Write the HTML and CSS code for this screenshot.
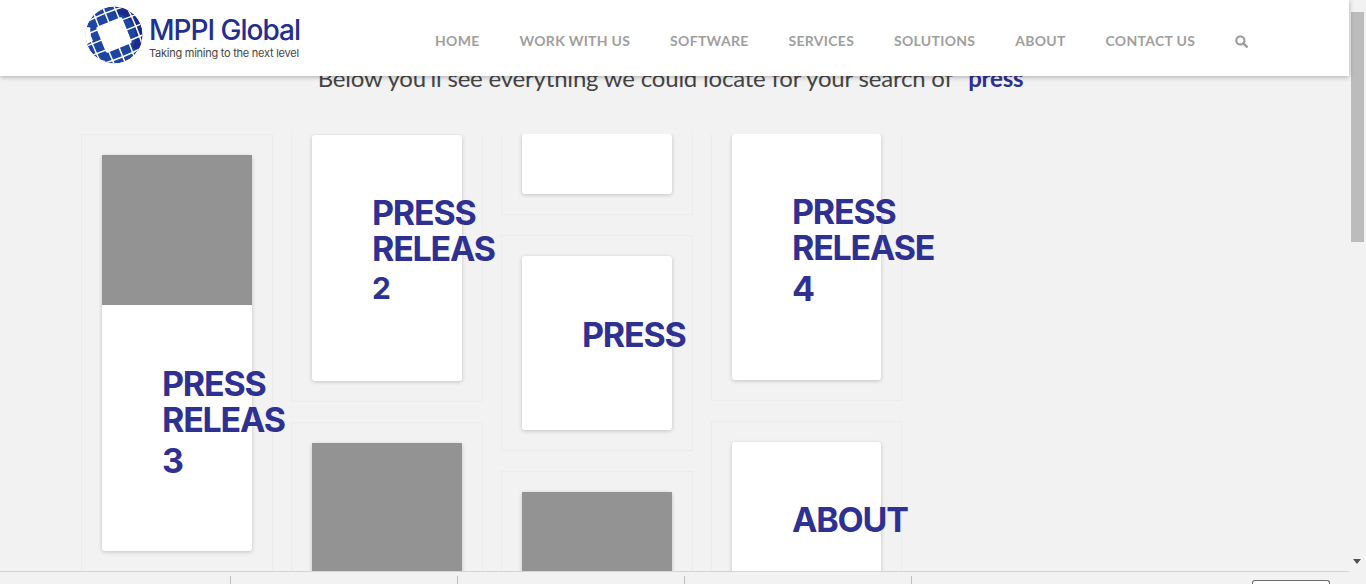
FILE: index.html
```html
<!DOCTYPE html>
<html lang="en">
<head>
    <meta charset="UTF-8">
    <title>Search results for press - MPPI Global</title>
    <link rel="stylesheet" href="styles.css">
</head>
<body>
    <div class="page">
        <header class="site-header">
            <a class="logo" href="#">
                <svg class="logo-globe" viewBox="0 0 58 58" width="58" height="58">
                    <defs>
                        <clipPath id="globe-clip"><circle cx="29" cy="29" r="28.5"/></clipPath>
                    </defs>
                    <g clip-path="url(#globe-clip)">
                        <circle cx="29" cy="29" r="28.5" fill="#1f45a3"/>
                        <path d="M29 4A25 25 0 0 1 50 43" fill="none" stroke="#1c2a8c" stroke-width="7"/>
                        <g transform="rotate(-22 29 29)">
                            <g fill="none" stroke="#fff" stroke-width="1.5">
                                <path d="M8 -4Q3 29 8 62"/>
                                <path d="M18.5 -4Q17 29 18.5 62"/>
                                <path d="M29 -4V62"/>
                                <path d="M39.5 -4Q41 29 39.5 62"/>
                                <path d="M50 -4Q55 29 50 62"/>
                                <path d="M-4 8Q29 3 62 8"/>
                                <path d="M-4 18.5Q29 17 62 18.5"/>
                                <path d="M-4 29H62"/>
                                <path d="M-4 39.5Q29 41 62 39.5"/>
                                <path d="M-4 50Q29 55 62 50"/>
                            </g>
                            <rect x="15" y="15" width="28" height="28" rx="2" fill="#fff"/>
                        </g>
                        <!-- open left edge of the globe -->
                        <path d="M4 37A26 26 0 0 1 1 21" fill="none" stroke="#fff" stroke-width="9"/>
                        <path d="M4 47A29 29 0 0 0 20 57" fill="none" stroke="#fff" stroke-width="4"/>
                    </g>
                </svg>
                <span class="logo-text">
                    <span class="logo-name">MPPI Global</span>
                    <span class="logo-tag">Taking mining to the next level</span>
                </span>
            </a>
            <nav class="main-nav">
                <a href="#">Home</a>
                <a href="#">Work with us</a>
                <a href="#">Software</a>
                <a href="#">Services</a>
                <a href="#">Solutions</a>
                <a href="#">About</a>
                <a href="#">Contact us</a>
                <a href="#" class="nav-search" aria-label="Search">
                    <svg viewBox="0 0 14 14" width="13" height="13">
                        <circle cx="5.8" cy="5.8" r="4.4" fill="none" stroke="#9f9f9f" stroke-width="2.4"/>
                        <path d="M9 9L12.6 12.6" stroke="#9f9f9f" stroke-width="2.8" stroke-linecap="round"/>
                    </svg>
                </a>
            </nav>
        </header>

        <p class="search-intro">Below you'll see everything we could locate for your search of <b>press</b></p>

        <main class="results">
            <div class="col">
                <article class="tile">
                    <div class="card">
                        <div class="thumb"></div>
                        <h2 class="card-title title-low">Press Releas <span class="num">3</span></h2>
                    </div>
                </article>
            </div>
            <div class="col">
                <article class="tile tile-cut tile-cut-1">
                    <div class="card card-246">
                        <h2 class="card-title">Press Releas <span class="num num-small">2</span></h2>
                    </div>
                </article>
                <article class="tile">
                    <div class="card">
                        <div class="thumb"></div>
                    </div>
                </article>
            </div>
            <div class="col">
                <article class="tile tile-cut">
                    <div class="card card-60"></div>
                </article>
                <article class="tile">
                    <div class="card card-174">
                        <h2 class="card-title title-low">Press</h2>
                    </div>
                </article>
                <article class="tile">
                    <div class="card">
                        <div class="thumb"></div>
                    </div>
                </article>
            </div>
            <div class="col col-last">
                <article class="tile tile-cut">
                    <div class="card card-246">
                        <h2 class="card-title">Press Release <span class="num">4</span></h2>
                    </div>
                </article>
                <article class="tile">
                    <div class="card card-tall">
                        <h2 class="card-title">About</h2>
                    </div>
                </article>
            </div>
        </main>

        <footer class="status-bar">
            <span class="status-cell"></span>
            <span class="status-cell"></span>
            <span class="status-cell"></span>
            <span class="status-cell"></span>
            <span class="status-button"></span>
        </footer>
    </div>

    <div class="scrollbar">
        <span class="scroll-thumb"></span>
        <span class="scroll-arrow"></span>
    </div>
</body>
</html>
```

FILE: styles.css
```css
* {
    margin: 0;
    padding: 0;
    box-sizing: border-box;
}

body {
    display: flex;
    height: 100vh;
    overflow: hidden;
    background: #f2f2f2;
    font-family: "Lato", sans-serif;
}

a {
    text-decoration: none;
}

.page {
    flex: 1;
    min-width: 0;
    display: flex;
    flex-direction: column;
    position: relative;
}

/* header */
.site-header {
    height: 76px;
    flex-shrink: 0;
    display: flex;
    align-items: flex-start;
    justify-content: space-between;
    padding: 0 101px 0 85px;
    background: #fff;
    box-shadow: 0 1px 5px rgba(0, 0, 0, 0.3);
    position: relative;
    z-index: 5;
}

.logo {
    display: flex;
    align-items: center;
    gap: 6px;
    padding-top: 6px;
}

.logo-text {
    display: flex;
    flex-direction: column;
    gap: 1px;
    padding-top: 5px;
}

.logo-name {
    font-family: "Inter", sans-serif;
    font-size: 28px;
    font-weight: 500;
    line-height: 30px;
    letter-spacing: -1px;
    color: #232e91;
}

.logo-tag {
    font-family: "Inter", sans-serif;
    font-size: 11px;
    line-height: 14px;
    letter-spacing: -0.25px;
    color: #444;
}

.main-nav {
    display: flex;
    align-items: center;
    gap: 39.8px;
    padding-top: 33px;
}

.main-nav a {
    font-size: 14px;
    font-weight: 700;
    line-height: 16px;
    letter-spacing: 0.3px;
    text-transform: uppercase;
    color: #9f9f9f;
}

.nav-search {
    display: flex;
}

/* search line, partly under the header */
.search-intro {
    height: 71px;
    margin-top: -13px;
    flex-shrink: 0;
    text-align: center;
    padding-right: 8px;
    font-size: 24px;
    line-height: 30px;
    letter-spacing: -0.2px;
    color: #444;
}

.search-intro b {
    margin-left: 10px;
    font-weight: 700;
    color: #2e3192;
}

/* results */
.results {
    flex: 1;
    min-height: 0;
    display: flex;
    gap: 18px;
    padding-left: 81px;
    overflow: hidden;
}

.col {
    width: 192px;
    flex-shrink: 0;
    display: flex;
    flex-direction: column;
    gap: 20px;
}

.col-last {
    width: 191px;
}

.tile {
    flex-shrink: 0;
    padding: 20px;
    border: 1px solid #ececec;
}

.tile-cut {
    padding-top: 0;
    border-top: 0;
}

.tile-cut-1 {
    padding-top: 1px;
}

.card {
    width: 150px;
    min-height: 396px;
    background: #fff;
    border-radius: 3px;
    box-shadow: 0 1px 4px rgba(0, 0, 0, 0.2);
}

.col-last .card {
    width: 149px;
}

.card-246 {
    min-height: 246px;
}

.card-60 {
    min-height: 60px;
}

.card-174 {
    min-height: 174px;
}

.col-last .card-tall {
    min-height: 300px;
}

.thumb {
    height: 150px;
    background: #939393;
}

.card-title {
    padding: 60px 0 0 60px;
    font-family: "Inter", sans-serif;
    font-size: 34px;
    font-weight: 700;
    line-height: 36px;
    letter-spacing: -1.2px;
    text-transform: uppercase;
    color: #2e3192;
}

.title-low {
    padding-top: 61px;
}

.num {
    position: relative;
    top: 5px;
}

.num-small {
    font-size: 30px;
    top: 2px;
}

/* bottom bar */
.status-bar {
    height: 13px;
    flex-shrink: 0;
    display: flex;
    align-items: flex-end;
    padding-top: 4px;
    border-top: 1px solid #d4d4d4;
    background: #f2f2f2;
    position: relative;
    z-index: 2;
}

.status-cell {
    width: 227px;
    height: 8px;
    border-right: 1px solid #bdbdbd;
}

.status-cell:first-child {
    width: 231px;
}

.status-button {
    position: absolute;
    left: 1252px;
    top: 8px;
    width: 78px;
    height: 6px;
    border: 1px solid #6a6a6a;
    border-bottom: 0;
    border-radius: 3px 3px 0 0;
    background: #fff;
}

/* scrollbar */
.scrollbar {
    width: 17px;
    flex-shrink: 0;
    height: calc(100vh - 13px);
    background: #f2f2f2;
    padding: 12px 2px 0;
    position: relative;
}

.scroll-thumb {
    display: block;
    height: 230px;
    background: #bcbcbc;
}

.scroll-arrow {
    position: absolute;
    left: 4px;
    bottom: 7px;
    border: 4.5px solid transparent;
    border-top: 5px solid #505050;
    border-bottom: 0;
}
```
